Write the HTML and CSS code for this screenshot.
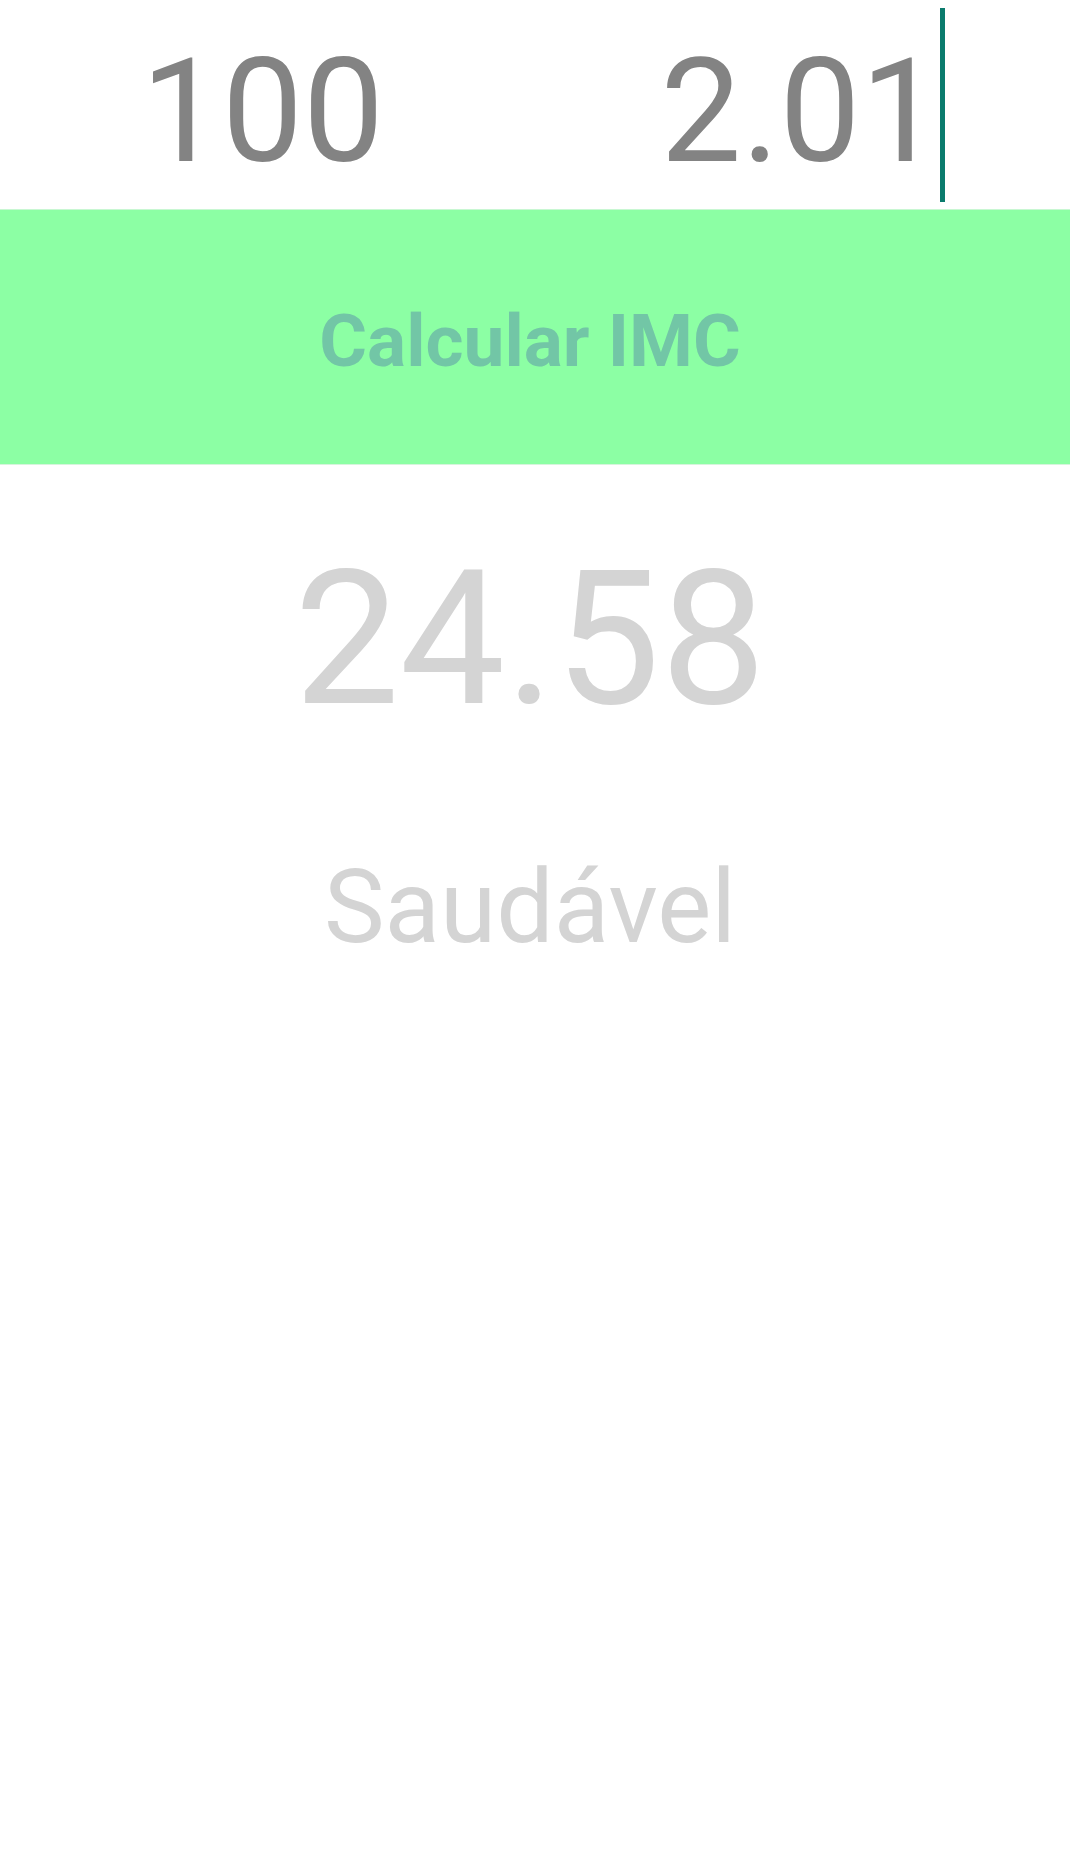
FILE: index.html
```html
<!DOCTYPE html>
<html lang="pt">
<head>
<meta charset="utf-8">
<title>Calcular IMC</title>
<link rel="stylesheet" href="styles.css">
</head>
<body>
<main class="screen">
  <div class="inputs">
    <div class="field field--weight"><span class="value">100</span></div>
    <div class="field field--height"><span class="value value--focused">2.01</span></div>
  </div>
  <button class="calc-btn" type="button">Calcular IMC</button>
  <div class="result">24.58</div>
  <div class="status">Saudável</div>
</main>
</body>
</html>
```

FILE: styles.css
```css
html, body {
  margin: 0;
  padding: 0;
  background: #ffffff;
}

body {
  font-family: Roboto, "Noto Sans", "Liberation Sans", sans-serif;
  width: 1070px;
  height: 1856px;
  overflow: hidden;
}

.screen {
  display: flex;
  flex-direction: column;
  width: 1070px;
}

.inputs {
  display: grid;
  grid-template-columns: 1fr 1fr;
  height: 209px;
}

.field {
  text-align: center;
  font-size: 144px;
  line-height: 190px;
  padding-top: 17px;
  color: #838383;
  box-sizing: border-box;
  height: 209px;
}

.field--weight {
  padding-right: 10px;
}

.field--height {
  padding-right: 3px;
}

.value {
  position: relative;
}

.value--focused::after {
  content: "";
  position: absolute;
  left: 100%;
  margin-left: -1px;
  top: -19px;
  width: 5px;
  height: 194px;
  background: #0b7b6d;
}

.calc-btn {
  display: block;
  width: 100%;
  height: 256px;
  margin: 0;
  border: 0;
  border-top: 1px solid #c8f7d2;
  border-bottom: 1px solid #d6f5dc;
  padding: 8px 10px 0 0;
  box-sizing: border-box;
  background: #8cffa4;
  color: #72c6a6;
  font-family: Roboto, "Noto Sans", "Liberation Sans", sans-serif;
  font-weight: 700;
  font-size: 73px;
  line-height: 246px;
  text-align: center;
}

.result {
  margin-top: 79px;
  padding-right: 10px;
  text-align: center;
  font-size: 188px;
  line-height: 190px;
  color: #d4d4d4;
}

.status {
  margin-top: 122px;
  padding-right: 10px;
  text-align: center;
  font-size: 102px;
  line-height: 103px;
  color: #d4d4d4;
}
```
